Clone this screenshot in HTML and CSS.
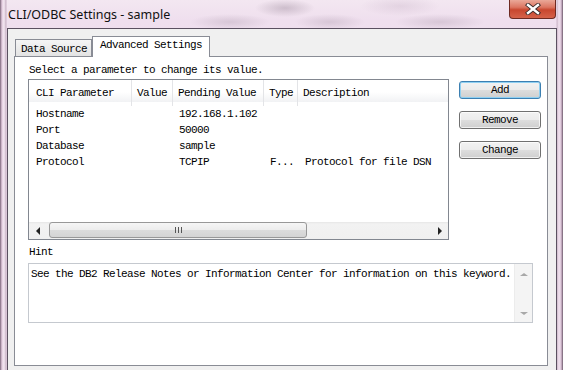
FILE: index.html
```html
<!DOCTYPE html>
<html lang="en">
<head>
    <meta charset="UTF-8">
    <meta name="viewport" content="width=device-width, initial-scale=1.0">
    <title>CLI/ODBC Settings - sample</title>
    <link rel="stylesheet" href="styles.css">
</head>
<body>

<div class="window">
    <div class="titlebar">
        <span class="title">CLI/ODBC Settings - sample</span>
        <div class="close">
            <svg width="16" height="12" viewBox="0 0 16 12">
                <path d="M3 2 L13 10 M13 2 L3 10" stroke="#3a2a2a" stroke-width="4.2" stroke-linecap="square"/>
                <path d="M3 2 L13 10 M13 2 L3 10" stroke="#ffffff" stroke-width="2.4" stroke-linecap="square"/>
            </svg>
        </div>
    </div>

    <div class="client">
        <div class="tabs">
            <div class="tab">Data Source</div>
            <div class="tab active">Advanced Settings</div>
        </div>

        <div class="panel">
            <p class="caption">Select a parameter to change its value.</p>

            <div class="main-row">
                <div class="listview">
                    <div class="lv-header">
                        <span class="col first">CLI Parameter</span>
                        <span class="col">Value</span>
                        <span class="col">Pending Value</span>
                        <span class="col">Type</span>
                        <span class="col last">Description</span>
                    </div>
                    <div class="lv-body">
                        <div class="lv-row">
                            <span class="first">Hostname</span><span></span><span>192.168.1.102</span><span></span><span></span>
                        </div>
                        <div class="lv-row">
                            <span class="first">Port</span><span></span><span>50000</span><span></span><span></span>
                        </div>
                        <div class="lv-row">
                            <span class="first">Database</span><span></span><span>sample</span><span></span><span></span>
                        </div>
                        <div class="lv-row">
                            <span class="first">Protocol</span><span></span><span>TCPIP</span><span>F...</span><span class="desc">Protocol for file DSN</span>
                        </div>
                    </div>
                    <div class="hscroll">
                        <span class="sb-btn"><span class="tri-left"></span></span>
                        <div class="sb-track">
                            <div class="thumb"><span class="grip"></span></div>
                        </div>
                        <span class="sb-btn"><span class="tri-right"></span></span>
                    </div>
                </div>

                <div class="buttons">
                    <button class="btn default">Add</button>
                    <button class="btn">Remove</button>
                    <button class="btn">Change</button>
                </div>
            </div>

            <p class="caption hint-label">Hint</p>
            <div class="hint">
                <div class="hint-text">See the DB2 Release Notes or Information Center for information on this keyword.</div>
                <div class="vscroll">
                    <span class="tri-up"></span>
                    <span class="tri-down"></span>
                </div>
            </div>
        </div>
    </div>
</div>

</body>
</html>
```

FILE: styles.css
```css
html, body {
    margin: 0;
    padding: 0;
}
body {
    width: 563px;
    height: 370px;
    overflow: hidden;
    font-family: "Liberation Mono", monospace;
    font-size: 11px;
    letter-spacing: -0.6px;
    color: #000;
}
.window {
    height: 370px;
    display: flex;
    flex-direction: column;
    padding: 0 6px 0 7px;
    box-sizing: border-box;
    background:
        radial-gradient(ellipse 30px 9px at 285px 8px, rgba(120, 100, 120, 0.3), transparent),
        radial-gradient(ellipse 40px 8px at 230px 22px, rgba(120, 100, 120, 0.2), transparent),
        radial-gradient(ellipse 35px 8px at 330px 22px, rgba(120, 100, 120, 0.2), transparent),
        radial-gradient(ellipse 45px 8px at 440px 22px, rgba(120, 100, 120, 0.2), transparent),
        radial-gradient(ellipse 40px 10px at 400px 6px, rgba(140, 110, 140, 0.15), transparent),
        linear-gradient(90deg, #7a6478 0, #e4cde0 2px, #f4e8f2 4px, #c9b3c6 6px, transparent 7px),
        linear-gradient(270deg, #6d5a6c 0, #dcc4d8 2px, #f2e4f0 4px, #cdb8ca 6px, transparent 7px),
        linear-gradient(180deg, #f3e7f1 0, #efdfee 20px, #e6d3e4 100%);
}
.titlebar {
    height: 28px;
    display: flex;
    justify-content: space-between;
    align-items: flex-start;
}
.title {
    font-family: "Noto Sans", sans-serif;
    font-size: 12.5px;
    letter-spacing: 0;
    color: #111;
    padding: 6px 0 0 1px;
}
.close {
    width: 47px;
    height: 19px;
    margin-right: 1px;
    box-sizing: border-box;
    border: 1px solid #6e2a22;
    border-top: none;
    border-radius: 0 0 4px 4px;
    background: linear-gradient(180deg, #eaa898 0, #dc7662 40%, #c8472f 55%, #d5624a 100%);
    display: flex;
    align-items: center;
    justify-content: center;
}
.client {
    flex: 1;
    background: #f0f0f0;
    border: 1px solid #5a5060;
    border-bottom: none;
}
.tabs {
    height: 27px;
    box-sizing: border-box;
    padding: 7px 0 0 7px;
    display: flex;
    align-items: flex-end;
}
.tab {
    height: 17px;
    width: 77px;
    box-sizing: border-box;
    border: 1px solid #898c95;
    border-bottom: none;
    background: linear-gradient(180deg, #f5f5f5, #e3e3e3);
    padding-left: 5px;
    line-height: 18px;
}
.tab.active {
    position: relative;
    z-index: 1;
    height: 21px;
    width: 118px;
    margin-bottom: -1px;
    background: #fff;
    padding-left: 7px;
    line-height: 17px;
}
.panel {
    height: 310px;
    width: 534px;
    margin-left: 6px;
    box-sizing: border-box;
    border: 1px solid #898c95;
    background: #fff;
    padding: 6px 0 0 13px;
}
.caption {
    margin: 0;
    height: 14px;
    line-height: 14px;
    padding-left: 1px;
}
.main-row {
    display: flex;
    gap: 10px;
    margin-top: 2px;
}
.listview {
    width: 421px;
    height: 161px;
    box-sizing: border-box;
    border: 1px solid #828790;
    display: flex;
    flex-direction: column;
}
.lv-header, .lv-row {
    display: grid;
    grid-template-columns: 103px 41px 91px 34px 1fr;
}
.lv-header {
    height: 22px;
    line-height: 26px;
    background: linear-gradient(180deg, #ffffff 0, #ffffff 55%, #f1f2f4 100%);
}
.lv-header .col {
    border-right: 1px solid #e3e4e7;
    padding-left: 5px;
}
.lv-header .col.last {
    border-right: none;
}
.lv-header .first, .lv-row .first {
    padding-left: 7px;
}
.lv-body {
    flex: 1;
    padding-top: 4px;
}
.lv-row {
    height: 16px;
    line-height: 16px;
}
.lv-row span {
    padding-left: 6px;
    white-space: nowrap;
}
.lv-row .first {
    padding-left: 7px;
}
.lv-row .desc {
    padding-left: 7px;
}
.hscroll {
    height: 17px;
    display: flex;
    background: linear-gradient(180deg, #e6e6e6 0, #f2f2f2 2px, #f0f0f0 100%);
}
.sb-btn {
    width: 17px;
    display: flex;
    align-items: center;
    justify-content: center;
}
.tri-left {
    border-right: 4px solid #222;
    border-top: 4px solid transparent;
    border-bottom: 4px solid transparent;
}
.tri-right {
    border-left: 4px solid #222;
    border-top: 4px solid transparent;
    border-bottom: 4px solid transparent;
}
.sb-track {
    flex: 1;
    padding: 0 0 0 3px;
}
.thumb {
    width: 258px;
    height: 16px;
    box-sizing: border-box;
    border: 1px solid #989898;
    border-radius: 3px;
    background: linear-gradient(180deg, #f6f6f6 0, #ececec 50%, #dcdcdc 51%, #d4d4d4 100%);
    display: flex;
    align-items: center;
    justify-content: center;
}
.grip {
    width: 7px;
    height: 6px;
    background: repeating-linear-gradient(90deg, #555 0, #555 1px, transparent 1px, transparent 3px);
}
.buttons {
    width: 82px;
    padding-top: 2px;
    display: flex;
    flex-direction: column;
    gap: 12px;
}
.btn {
    height: 18px;
    padding: 0;
    font-family: "Liberation Mono", monospace;
    font-size: 11px;
    letter-spacing: -0.6px;
    color: #000;
    border: 1px solid #707070;
    border-radius: 3px;
    background: linear-gradient(180deg, #f2f2f2 0, #ebebeb 50%, #dddddd 51%, #cfcfcf 100%);
    box-shadow: inset 0 0 0 1px rgba(255, 255, 255, 0.7);
}
.btn.default {
    border-color: #3c7fb1;
    box-shadow: inset 0 0 0 1px #8fd0f2;
}
.hint-label {
    margin-top: 5px;
}
.hint {
    margin-top: 4px;
    width: 505px;
    height: 60px;
    box-sizing: border-box;
    border: 1px solid #c5c9cf;
    display: flex;
}
.hint-text {
    flex: 1;
    padding: 3px 0 0 2px;
    line-height: 14px;
    white-space: nowrap;
}
.vscroll {
    width: 17px;
    background: #f4f4f4;
    border-left: 1px solid #ececec;
    display: flex;
    flex-direction: column;
    justify-content: space-between;
    align-items: center;
    padding: 9px 0 7px;
}
.tri-up {
    border-bottom: 3px solid #a8a8a8;
    border-left: 4px solid transparent;
    border-right: 4px solid transparent;
}
.tri-down {
    border-top: 3px solid #a8a8a8;
    border-left: 4px solid transparent;
    border-right: 4px solid transparent;
}
```
